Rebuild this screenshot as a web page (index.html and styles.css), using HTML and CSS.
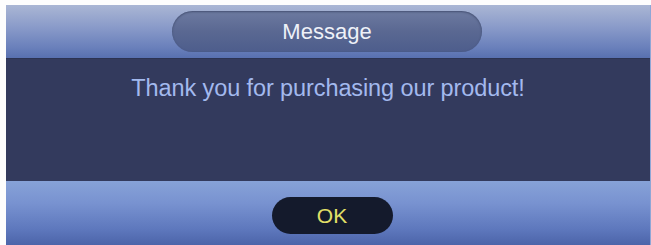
FILE: index.html
```html
<!DOCTYPE html>
<html>
<head>
<meta charset="utf-8">
<link rel="stylesheet" href="styles.css">
</head>
<body>
<div class="dialog">
  <div class="header">
    <div class="title">Message</div>
  </div>
  <div class="content">
    <p class="msg">Thank you for purchasing our product!</p>
  </div>
  <div class="footer">
    <button class="ok">OK</button>
  </div>
</div>
</body>
</html>
```
FILE: styles.css
```css
html, body {
  margin: 0;
  padding: 0;
  background: #fdfdfd;
}
body {
  font-family: "Liberation Sans", Arial, sans-serif;
}
.dialog {
  margin: 5px 0 0 6px;
  width: 645px;
  height: 240px;
  display: flex;
  flex-direction: column;
  background: #333a5d;
  border-right: 1px solid #8fa6d6;
  box-sizing: border-box;
}
.header {
  height: 54px;
  background: linear-gradient(to bottom, #aab6d4 0%, #8b9cca 40%, #6a80bb 80%, #5870b0 100%);
  display: flex;
  justify-content: center;
  align-items: flex-start;
  padding-top: 6px;
  box-sizing: border-box;
  border-bottom: 1px solid #2c3352;
}
.title {
  width: 310px;
  height: 41px;
  border-radius: 21px;
  background: linear-gradient(to bottom, #6d7aa0 0%, #5a6892 50%, #4d5d8c 100%);
  box-shadow: inset 0 1px 2px rgba(30, 40, 70, 0.5);
  color: #eef1f8;
  font-size: 22px;
  display: flex;
  align-items: center;
  justify-content: center;
  margin-left: -2px;
}
.content {
  flex: 1;
  background: #333a5d;
  display: flex;
  justify-content: center;
  align-items: flex-start;
}
.msg {
  margin: 16px 0 0 0;
  color: #a3b9ee;
  font-size: 23.5px;
  letter-spacing: -0.1px;
}
.footer {
  height: 64px;
  background: linear-gradient(to bottom, #87a2d8 0%, #7892d0 35%, #5e78bd 75%, #4c64a9 100%);
  display: flex;
  justify-content: center;
  align-items: flex-start;
  padding-top: 16px;
  padding-left: 8px;
  box-sizing: border-box;
}
.ok {
  width: 121px;
  height: 37px;
  border: none;
  border-radius: 19px;
  background: #141a2c;
  color: #e2e068;
  font-family: "Liberation Sans", Arial, sans-serif;
  font-size: 21px;
  padding: 0;
}
```
